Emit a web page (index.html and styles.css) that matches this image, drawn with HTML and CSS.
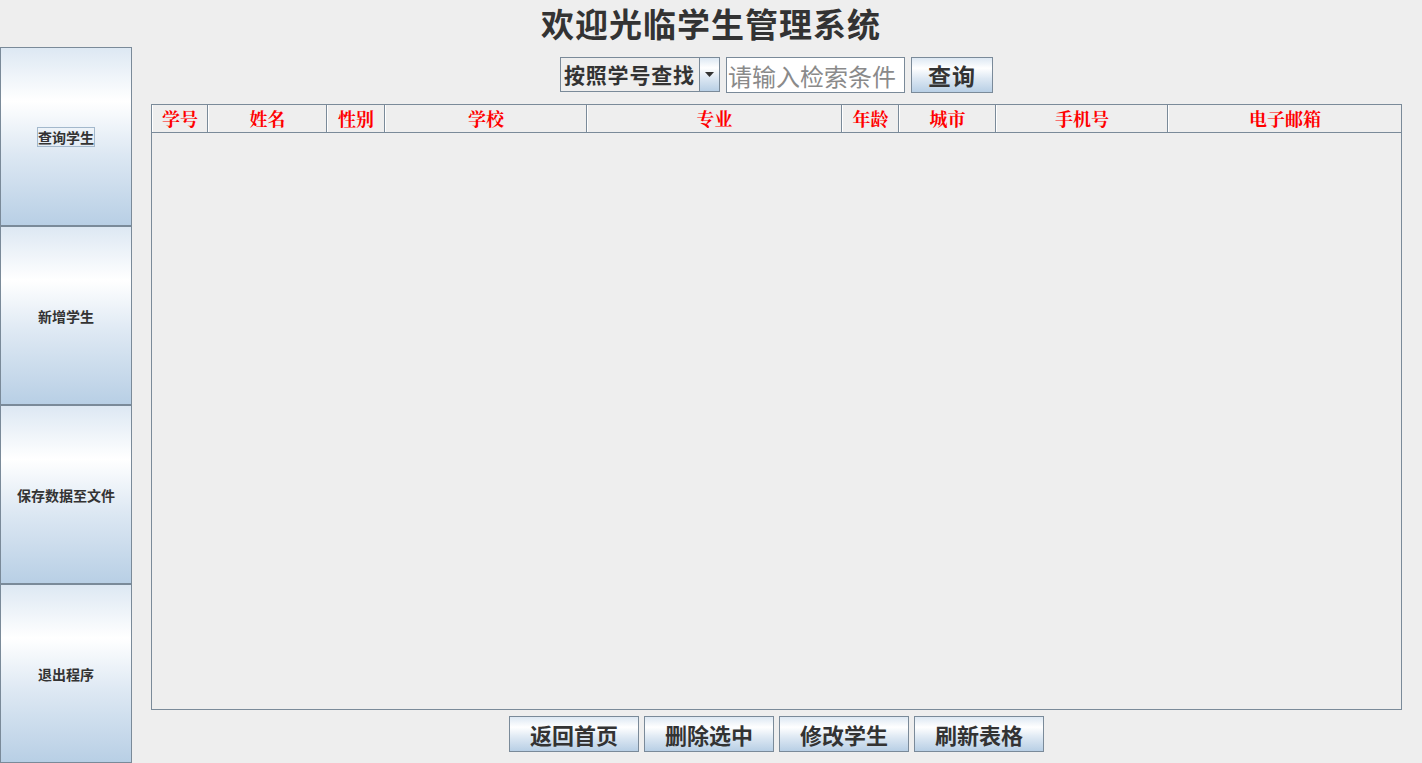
FILE: index.html
```html
<!DOCTYPE html>
<html lang="zh">
<head>
<meta charset="utf-8">
<title>学生管理系统</title>
<link rel="stylesheet" href="styles.css">
</head>
<body>
<div class="app">
  <h1 class="title">欢迎光临学生管理系统</h1>
  <div class="body">
    <nav class="sidebar">
      <button class="side-btn"><span class="focus">查询学生</span></button>
      <button class="side-btn"><span>新增学生</span></button>
      <button class="side-btn"><span>保存数据至文件</span></button>
      <button class="side-btn"><span>退出程序</span></button>
    </nav>
    <main class="main">
      <div class="search">
        <div class="combo">
          <span class="combo-text">按照学号查找</span>
          <span class="combo-arrow"><svg width="9" height="5" viewBox="0 0 9 5"><path d="M0 0h9L4.5 5z" fill="#333"/></svg></span>
        </div>
        <input class="search-input" type="text" placeholder="请输入检索条件">
        <button class="btn btn-query">查询</button>
      </div>
      <div class="table">
        <div class="thead">
          <div class="th">学号</div>
          <div class="th">姓名</div>
          <div class="th">性别</div>
          <div class="th">学校</div>
          <div class="th">专业</div>
          <div class="th">年龄</div>
          <div class="th">城市</div>
          <div class="th">手机号</div>
          <div class="th">电子邮箱</div>
        </div>
        <div class="tbody"></div>
      </div>
      <div class="actions">
        <button class="btn btn-action">返回首页</button>
        <button class="btn btn-action">删除选中</button>
        <button class="btn btn-action">修改学生</button>
        <button class="btn btn-action">刷新表格</button>
      </div>
    </main>
  </div>
</div>
</body>
</html>
```

FILE: styles.css
```css
* { box-sizing: border-box; }
html, body {
  margin: 0;
  padding: 0;
  background: #eeeeee;
  font-family: "Noto Sans CJK SC", "Noto Sans", sans-serif;
  color: #333333;
}
.app {
  width: 1422px;
  height: 763px;
  display: flex;
  flex-direction: column;
  overflow: hidden;
}
.title {
  margin: 0;
  height: 47px;
  line-height: 47px;
  text-align: center;
  font-size: 33px;
  letter-spacing: 1px;
  font-weight: 700;
  color: #333333;
}
.body {
  flex: 1;
  display: flex;
  min-height: 0;
}
.sidebar {
  width: 132px;
  display: flex;
  flex-direction: column;
}
.side-btn,
.btn,
.combo-arrow {
  background: linear-gradient(to bottom, #dde8f3 0%, #ffffff 30%, #dde8f3 60%, #b8cfe5 100%);
  border: 1px solid #7a8a99;
}
.side-btn {
  height: 179px;
  width: 132px;
  margin: 0;
  padding: 0;
  font-family: inherit;
  font-size: 14px;
  font-weight: 700;
  color: #333333;
  display: flex;
  align-items: center;
  justify-content: center;
}
.side-btn .focus {
  border: 1px solid #a3b8cc;
  padding: 0;
  line-height: 18px;
}
.main {
  flex: 1;
  display: flex;
  flex-direction: column;
  padding: 10px 20px 11px 19px;
}
.search {
  height: 36px;
  display: flex;
  justify-content: center;
  align-items: flex-start;
  gap: 6px;
}
.combo {
  width: 160px;
  height: 35px;
  border: 1px solid #7a8a99;
  background: #eeeeee;
  display: flex;
}
.combo-text {
  flex: 1;
  font-size: 21px;
  letter-spacing: 0.8px;
  font-weight: 700;
  line-height: 33px;
  padding-left: 3px;
  white-space: nowrap;
  color: #333333;
}
.combo-arrow {
  width: 20px;
  flex: none;
  border-width: 0 0 0 1px;
  display: flex;
  align-items: center;
  justify-content: center;
}
.search-input {
  width: 179px;
  height: 36px;
  border: 1px solid #7a8a99;
  background: #ffffff;
  font-family: inherit;
  font-size: 24px;
  padding: 0 1px;
  color: #333333;
}
.search-input::placeholder {
  color: #8a8a8a;
}
.btn {
  margin: 0;
  padding: 0;
  font-family: inherit;
  font-weight: 700;
  color: #333333;
  cursor: pointer;
}
.btn-query {
  width: 82px;
  height: 36px;
  font-size: 23px;
  letter-spacing: 1px;
}
.table {
  margin-top: 11px;
  flex: 1;
  border: 1px solid #7a8a99;
  background: #eeeeee;
  display: flex;
  flex-direction: column;
}
.thead {
  display: grid;
  grid-template-columns: 56px 119px 58px 202px 255px 57px 97px 172px 1fr;
  height: 28px;
  border-bottom: 1px solid #7a8a99;
}
.th {
  border-left: 1px solid #ffffff;
  border-right: 1px solid #7a8a99;
  color: #ff0000;
  font-size: 18px;
  font-weight: 700;
  text-align: center;
  line-height: 27px;
  font-family: "Noto Serif CJK SC", "Liberation Serif", "Noto Sans CJK SC", serif;
}
.th:last-child { border-right: none; }
.tbody { flex: 1; }
.actions {
  margin-top: 6px;
  height: 36px;
  display: flex;
  justify-content: center;
  gap: 5px;
}
.btn-action {
  width: 130px;
  height: 36px;
  font-size: 22px;
}
```
